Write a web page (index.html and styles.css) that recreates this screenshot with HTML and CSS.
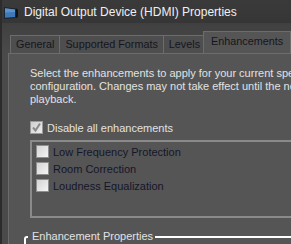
FILE: index.html
```html
<!DOCTYPE html>
<html lang="en">
<head>
    <meta charset="UTF-8">
    <meta name="viewport" content="width=device-width, initial-scale=1.0">
    <title>Digital Output Device (HDMI) Properties</title>
    <link rel="stylesheet" href="styles.css">
</head>
<body>
    <div class="window">
        <!-- Title bar -->
        <div class="titlebar">
            <svg class="app-icon" width="16" height="14" viewBox="0 0 16 14">
                <path d="M1 1 L13 2.5 L13 12 L1 13 Z" fill="#1c2430"/>
                <path d="M2 2.2 L12 3.4 L12 11 L2 11.8 Z" fill="#3f78b8"/>
                <path d="M2 2.2 L12 3.4 L12 6 L2 6.5 Z" fill="#6fa3d8" opacity="0.6"/>
                <path d="M13 2.5 L15 3.5 L15 11 L13 12 Z" fill="#0e131a"/>
            </svg>
            <span class="title">Digital Output Device (HDMI) Properties</span>
        </div>

        <div class="window-body">
            <!-- Tabs -->
            <div class="tabs">
                <div class="tab">General</div>
                <div class="tab">Supported Formats</div>
                <div class="tab">Levels</div>
                <div class="tab active">Enhancements</div>
            </div>

            <div class="panel">
                <p class="desc">Select the enhancements to apply for your current speaker<br>configuration. Changes may not take effect until the next<br>playback.</p>

                <label class="check light">
                    <span class="box checked">
                        <svg width="11" height="11" viewBox="0 0 11 11"><path d="M2 5.5 L4.5 8.5 L9 1.5" fill="none" stroke="#8a8a8a" stroke-width="2"/></svg>
                    </span>
                    Disable all enhancements
                </label>

                <div class="list">
                    <label class="check"><span class="box"></span>Low Frequency Protection</label>
                    <label class="check"><span class="box"></span>Room Correction</label>
                    <label class="check"><span class="box"></span>Loudness Equalization</label>
                </div>

                <fieldset class="group">
                    <legend>Enhancement Properties</legend>
                </fieldset>
            </div>
        </div>
    </div>
</body>
</html>
```

FILE: styles.css
```css
body {
    margin: 0;
    padding: 0;
    background-color: #4a4a4a;
    font-family: "Liberation Sans", Arial, sans-serif;
    overflow: hidden;
}

.window {
    width: 320px;
    height: 244px;
    border-left: 2px solid #2c2c2c;
    background-color: #4a4a4a;
}

.titlebar {
    height: 23px;
    display: flex;
    align-items: center;
    background: linear-gradient(#3a3a3a, #363636);
    padding-left: 1px;
}

.app-icon {
    margin-top: 2px;
}

.title {
    margin-left: 5px;
    color: #f0f0f0;
    font-size: 12px;
}

.window-body {
    padding-left: 6px;
    padding-top: 9px;
    background: linear-gradient(#404040, #4a4a4a 30px);
}

.tabs {
    display: flex;
    align-items: flex-end;
    padding-left: 2px;
    height: 21px;
}

.tab {
    height: 17px;
    line-height: 17px;
    padding: 0 5px;
    border: 1px solid #6c6c6c;
    border-bottom: none;
    margin-right: -1px;
    background-color: #4e4e4e;
    color: #15151f;
    font-size: 10.8px;
}

.tab.active {
    height: 21px;
    line-height: 19px;
    padding: 0 7px;
    margin-left: -2px;
    background-color: #555555;
    position: relative;
    z-index: 1;
}

.panel {
    border: 1px solid #6c6c6c;
    background-color: #555555;
    padding: 13px 0 0 15px;
    height: 200px;
}

.desc {
    margin: 0 0 0 6px;
    color: #e2e2e2;
    font-size: 11px;
    line-height: 13px;
    white-space: nowrap;
}

.check {
    display: flex;
    align-items: center;
    height: 13px;
    font-size: 11px;
    color: #16162a;
}

.check.light {
    color: #e2e2e2;
    margin: 15px 0 0 6px;
}

.box {
    width: 11px;
    height: 11px;
    border: 1px solid #8e8f8f;
    background: linear-gradient(135deg, #d4d4d4, #f4f4f4);
    margin-right: 4px;
    display: flex;
    align-items: center;
    justify-content: center;
    flex-shrink: 0;
}

.box.checked {
    background: linear-gradient(135deg, #cfcfcf, #ececec);
    border-color: #9a9a9a;
}

.list {
    box-sizing: border-box;
    margin: 6px 0 0 6px;
    height: 78px;
    border: 2px solid #8a8a8a;
    border-right: none;
    padding: 3px 0 0 4px;
    display: flex;
    flex-direction: column;
    gap: 4px;
}

.group {
    margin: 12px 0 0 0;
    border: 2px solid #ffffff;
    border-radius: 3px;
    padding: 0;
    height: 40px;
}

.group legend {
    padding: 0 2px 0 4px;
    margin-left: 2px;
    color: #e2e2e2;
    font-size: 11px;
    line-height: 13px;
}
```
